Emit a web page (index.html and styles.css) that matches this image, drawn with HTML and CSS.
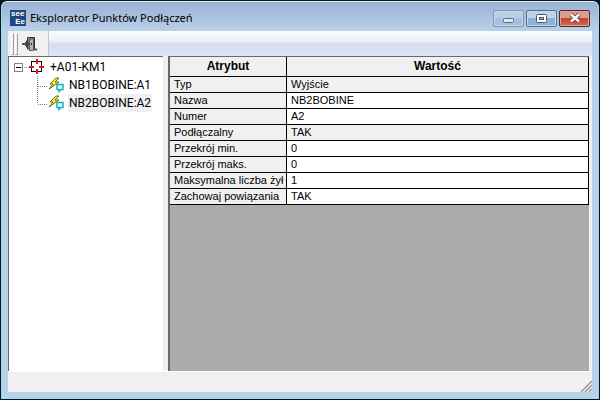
FILE: index.html
```
<!DOCTYPE html>
<html lang="pl">
<head>
    <meta charset="UTF-8">
    <meta name="viewport" content="width=device-width, initial-scale=1.0">
    <title>Eksplorator Punktów Podłączeń</title>
    <link rel="stylesheet" href="styles.css">
</head>
<body>
    <div class="window">
        <header class="titlebar">
            <div class="app-icon"><span>see</span><span class="app-icon-end">Ee</span></div>
            <h1>Eksplorator Punktów Podłączeń</h1>
            <div class="window-buttons">
                <button class="win-btn minimize" aria-label="Minimalizuj">
                    <svg width="12" height="6" viewBox="0 0 12 6"><rect x="0.5" y="0.5" width="10" height="4" rx="1" fill="#dfe7ef" stroke="#5d6b7a"/></svg>
                </button>
                <button class="win-btn maximize" aria-label="Maksymalizuj">
                    <svg width="11" height="9" viewBox="0 0 11 9"><rect x="0.5" y="0.5" width="10" height="8" rx="1" fill="#fff" stroke="#46566a"/><rect x="3.5" y="3.5" width="4" height="2" fill="#9fb9d6" stroke="#46566a"/></svg>
                </button>
                <button class="win-btn close" aria-label="Zamknij">
                    <svg width="12" height="10" viewBox="0 0 12 10"><path d="M2 1.5l8 7M10 1.5l-8 7" stroke="#54343a" stroke-width="4"/><path d="M2 1.5l8 7M10 1.5l-8 7" stroke="#fff" stroke-width="2.4"/></svg>
                </button>
            </div>
        </header>

        <div class="client">
            <div class="toolbar">
                <div class="toolbar-band">
                    <span class="grip"></span>
                    <span class="grip"></span>
                    <button class="tool-btn" aria-label="Wyjście">
                        <svg width="15" height="14" viewBox="0 0 15 14">
                            <path d="M5.5 12.5v-12h7v12" fill="#888" stroke="#333"/>
                            <path d="M7.5 2.5l4-1v11.5l-4 1z" fill="#b4b4b4" stroke="#555"/>
                            <path d="M9.5 6v2" stroke="#222"/>
                            <path d="M3 5h1V3l4 4-4 4V9H3z" fill="#444"/>
                            <path d="M0 7h4M11 12.5h4" stroke="#555" stroke-width="2"/>
                        </svg>
                    </button>
                </div>
            </div>

            <main class="panes">
                <nav class="tree">
                    <div class="tree-row root">
                        <svg class="expander" width="18" height="18" viewBox="0 0 18 18" shape-rendering="crispEdges">
                            <rect x="0.5" y="5.5" width="8" height="8" fill="#fff" stroke="#8c7c8c"/>
                            <path d="M2 9.5h5" stroke="#000"/>
                            <path d="M10 9.5h5" stroke="#888" stroke-dasharray="1 1"/>
                        </svg>
                        <svg class="node-icon" width="16" height="18" viewBox="0 0 16 18" shape-rendering="crispEdges">
                            <rect x="2.5" y="3.5" width="10" height="10" stroke="#000"/>
                            <path d="M7 1h2v5h-2zM7 11h2v5h-2zM0 8h5v2h-5zM10 8h5v2h-5z" fill="#e81818"/>
                        </svg>
                        <span class="label">+A01-KM1</span>
                    </div>
                    <div class="tree-row child">
                        <svg class="branch" width="11" height="18" viewBox="0 0 11 18" shape-rendering="crispEdges">
                            <path d="M0.5 0v18M1 10.5h10" stroke="#777" stroke-dasharray="1 1"/>
                        </svg>
                        <svg class="node-icon" width="16" height="18" viewBox="0 0 16 18">
                            <path d="M8 2h3L7 6h4L1 13l4-5H2z" fill="#f8ef28" stroke="#4c480c" stroke-width="0.8"/>
                            <path d="M9 8.5h6v5h-2l-2 2v-2H9z" fill="#e4ffff" stroke="#10b5c0" stroke-width="1.5"/>
                        </svg>
                        <span class="label">NB1BOBINE:A1</span>
                    </div>
                    <div class="tree-row child">
                        <svg class="branch" width="11" height="18" viewBox="0 0 11 18" shape-rendering="crispEdges">
                            <path d="M0.5 0v10M1 10.5h10" stroke="#777" stroke-dasharray="1 1"/>
                        </svg>
                        <svg class="node-icon" width="16" height="18" viewBox="0 0 16 18">
                            <path d="M8 2h3L7 6h4L1 13l4-5H2z" fill="#f8ef28" stroke="#4c480c" stroke-width="0.8"/>
                            <path d="M9 8.5h6v5h-2l-2 2v-2H9z" fill="#e4ffff" stroke="#10b5c0" stroke-width="1.5"/>
                        </svg>
                        <span class="label selected">NB2BOBINE:A2</span>
                    </div>
                </nav>

                <section class="grid-pane">
                    <table class="grid">
                        <thead>
                            <tr><th class="attr">Atrybut</th><th>Wartość</th></tr>
                        </thead>
                        <tbody>
                            <tr class="readonly"><td>Typ</td><td>Wyjście</td></tr>
                            <tr><td>Nazwa</td><td>NB2BOBINE</td></tr>
                            <tr><td>Numer</td><td>A2</td></tr>
                            <tr class="readonly"><td>Podłączalny</td><td>TAK</td></tr>
                            <tr><td>Przekrój min.</td><td>0</td></tr>
                            <tr><td>Przekrój maks.</td><td>0</td></tr>
                            <tr><td>Maksymalna liczba żył</td><td>1</td></tr>
                            <tr><td>Zachowaj powiązania</td><td>TAK</td></tr>
                        </tbody>
                    </table>
                </section>
            </main>

            <footer class="statusbar">
                <svg width="12" height="12" viewBox="0 0 12 12">
                    <path d="M1 12L12 1M5 12l7-7M9 12l3-3" stroke="#999" stroke-width="1.5"/>
                </svg>
            </footer>
        </div>
    </div>
</body>
</html>
```
FILE: styles.css
```
/* Global styles */
* {
    box-sizing: border-box;
}
body {
    margin: 0;
    height: 100vh;
    padding: 1px;
    background: #06151c;
    color: #000;
    font-family: "Liberation Sans", Arial, sans-serif;
    font-size: 11px;
}
button {
    padding: 0;
    border: none;
    background: none;
}
svg {
    display: block;
    fill: none;
    flex: none;
}
/* Window frame */
.window {
    display: flex;
    flex-direction: column;
    height: 100%;
    padding: 0 6px 6px;
    border: 1px solid #8fdcec;
    border-top-color: #e4eef8;
    border-radius: 6px 6px 0 0;
    background: #b9d1ea;
}
.titlebar {
    display: flex;
    align-items: center;
    height: 29px;
    margin: 0 -6px;
    padding: 3px 8px 0;
    border-radius: 5px 5px 0 0;
    background: linear-gradient(#98b3d2, #b9d0e9);
}
.app-icon {
    display: flex;
    flex-direction: column;
    width: 16px;
    height: 16px;
    padding: 0 1px;
    background: #1f4779;
    color: #fff;
    font-size: 8px;
    font-weight: bold;
    line-height: 8px;
}
.app-icon-end {
    align-self: flex-end;
}
h1 {
    flex: 1;
    margin: 0 0 0 4px;
    font-family: "Noto Sans", "Open Sans", sans-serif;
    font-size: 11px;
    font-weight: normal;
    line-height: 16px;
}
.window-buttons {
    display: flex;
    gap: 2px;
}
.win-btn {
    display: flex;
    align-items: center;
    justify-content: center;
    width: 31px;
    height: 17px;
    border: 1px solid #8398b2;
    border-radius: 2px;
    background: linear-gradient(#b9cfe7 50%, #a5c0dd 50%);
    box-shadow: inset 0 0 0 1px #c4d8ec;
}
.win-btn.minimize {
    align-items: flex-end;
    padding-bottom: 2px;
}
.win-btn.maximize {
    border-color: #50709a;
    background: linear-gradient(#bdd3ea 50%, #91b1d4 50%);
}
.win-btn.close {
    border-color: #5b2530;
    background: linear-gradient(#dc9a8c 45%, #c0442f 45%, #d0694f);
    box-shadow: inset 0 0 0 1px #e1a397;
}
/* Content */
.client {
    display: flex;
    flex: 1;
    flex-direction: column;
    min-height: 0;
    background: #f0f0f0;
}
.toolbar {
    height: 25px;
    background: linear-gradient(#fbfcfe, #e7ecf7 45%, #d5dcef 50%, #dfe5f5);
}
.toolbar-band {
    display: flex;
    align-items: center;
    width: 41px;
    height: 100%;
    padding-left: 3px;
    gap: 1px;
    border-right: 1px solid #c4c8d0;
    background: #f0f0f0;
}
.grip {
    width: 3px;
    height: 22px;
    border: 1px solid #fff;
    border-right-color: #a0a0a0;
    border-bottom-color: #a0a0a0;
}
.tool-btn {
    margin-left: 3px;
}
.panes {
    display: flex;
    flex: 1;
    gap: 5px;
    min-height: 0;
    padding-right: 3px;
}
/* Tree */
.tree {
    flex: none;
    width: 27%;
    max-width: 155px;
    padding-top: 1px;
    border-top: 1px solid #696969;
    border-left: 1px solid #696969;
    background: #fff;
    font-family: Roboto, "Noto Sans", sans-serif;
    font-size: 12px;
}
.tree-row {
    display: flex;
    height: 18px;
    padding-left: 5px;
}
.tree-row.child {
    padding-left: 28px;
}
.root .node-icon {
    margin-left: -3px;
}
.label {
    margin-left: 4px;
    padding: 0 1px;
    line-height: 18px;
    white-space: nowrap;
}
.label.selected {
    background: #f0f0f0;
}
/* Attribute grid */
.grid-pane {
    flex: 1;
    min-width: 0;
    border-top: 1px solid #696969;
    border-left: 2px solid #696969;
    background: #ababab;
}
.grid {
    width: 100%;
    border-collapse: separate;
    border-spacing: 0;
    table-layout: fixed;
    line-height: 15px;
}
.grid th,
.grid td {
    padding: 0 4px;
    border-right: 1px solid #000;
    border-bottom: 1px solid #000;
    text-align: left;
    white-space: nowrap;
}
.grid th {
    height: 20px;
    background: #f0f0f0;
    font-size: 12px;
    text-align: center;
}
.grid .attr {
    width: 117px;
}
.grid td {
    height: 16px;
    background: #fff;
}
.grid td:first-child,
.grid .readonly td {
    background: #f0f0f0;
}
/* Status bar */
.statusbar {
    display: flex;
    align-items: flex-end;
    justify-content: flex-end;
    height: 21px;
    border-top: 1px solid #fff;
}
```
